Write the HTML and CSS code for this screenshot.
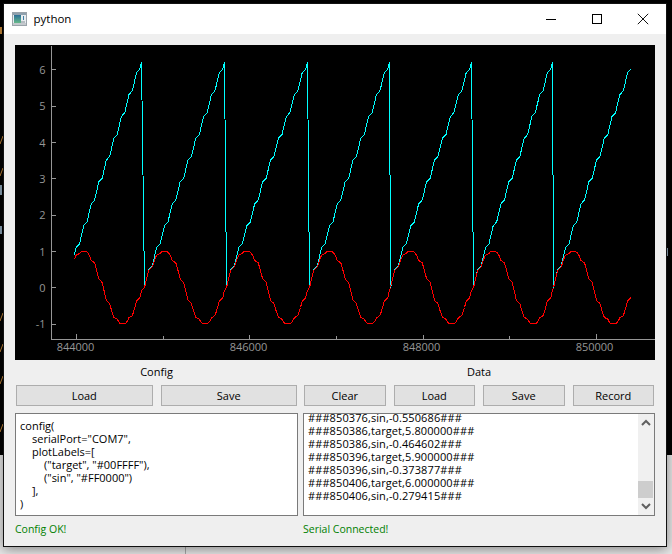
FILE: index.html
```html
<!DOCTYPE html>
<html lang="en">
<head>
<meta charset="utf-8">
<title>python</title>
<link rel="stylesheet" href="styles.css">
</head>
<body>
<div class="desk" aria-hidden="true">
  <div class="desk-dark"></div>
  <i class="frag frag-a"></i>
  <i class="frag frag-b"></i>
  <i class="frag frag-c"></i>
  <i class="frag frag-d"></i>
  <i class="frag frag-e"></i>
  <i class="frag frag-f"></i>
  <i class="frag frag-g"></i>
  <i class="frag frag-h"></i>
  <i class="frag frag-i"></i>
  <i class="frag frag-j"></i>
  <i class="desk-line"></i>
</div>
<main class="window">
  <header class="titlebar">
    <svg class="app-icon" width="15" height="14" viewBox="0 0 15 14">
      <defs>
        <linearGradient id="ig" x1="0" y1="0" x2="0" y2="1">
          <stop offset="0" stop-color="#2b6f97"/>
          <stop offset="1" stop-color="#66b98a"/>
        </linearGradient>
      </defs>
      <rect x="0.5" y="0.5" width="14" height="13" fill="#e8ecef" stroke="#9aa3aa"/>
      <rect x="1" y="1" width="13" height="2" fill="#8fa0ad"/>
      <rect x="2" y="3" width="7" height="8" fill="url(#ig)"/>
      <rect x="11" y="4" width="1" height="4" fill="#3f7fa5"/>
      <rect x="9" y="9" width="4" height="2" fill="#b5bcc2"/>
      <rect x="1" y="11" width="13" height="2" fill="#c4c9cd"/>
    </svg>
    <span class="title-text">python</span>
    <div class="controls">
      <div class="ctl"><svg width="12" height="12" viewBox="0 0 12 12"><path d="M1 6.5H11" stroke="#000" fill="none"/></svg></div>
      <div class="ctl"><svg width="12" height="12" viewBox="0 0 12 12"><rect x="1.5" y="1.5" width="9" height="9" fill="none" stroke="#000"/></svg></div>
      <div class="ctl"><svg width="12" height="12" viewBox="0 0 12 12"><path d="M.8.8L11.2 11.2M11.2.8L.8 11.2" stroke="#111" fill="none"/></svg></div>
    </div>
  </header>
  <div class="content">
    <svg class="plot" width="640" height="315" viewBox="15 45 640 315">
      <g class="axis">
        <path d="M51.5 46V339.5H655"/>
        <path d="M52 69.5H56M52 106H56M52 142.500H56M52 178.500H56M52 215H56M52 251.500H56M52 287.500H56M52 324H56"/>
        <path d="M76.500 334V339M163.500 336V339M249.500 335V339M336.500 336V339M423.500 335V339M509.500 336V339M596.500 334V339"/>
      </g>
      <g class="ylabels">
        <text x="45.500" y="73.500">6</text>
        <text x="45.500" y="110">5</text>
        <text x="45.500" y="146.500">4</text>
        <text x="45.500" y="182.500">3</text>
        <text x="45.500" y="219">2</text>
        <text x="45.500" y="255.500">1</text>
        <text x="45.500" y="291.500">0</text>
        <text x="45.500" y="328">-1</text>
      </g>
      <g class="xlabels">
        <text x="75.500" y="351">844000</text>
        <text x="248.500" y="351">846000</text>
        <text x="421.500" y="351">848000</text>
        <text x="594.500" y="351">850000</text>
      </g>
      <polyline id="trace-target" class="trace trace-target" points=""/>
      <polyline id="trace-sin" class="trace trace-sin" points=""/>
    </svg>

    <div class="panels">
      <section class="panel panel-config">
        <div class="panel-title">Config</div>
        <div class="btn-row btn-row-config">
          <button class="btn" type="button">Load</button>
          <button class="btn" type="button">Save</button>
        </div>
        <div class="editor editor-config">
          <div>config(</div>
          <div class="ind1">serialPort="COM7",</div>
          <div class="ind1">plotLabels=[</div>
          <div class="ind2">("target", "#00FFFF"),</div>
          <div class="ind2">("sin", "#FF0000")</div>
          <div class="ind1">],</div>
          <div>)</div>
        </div>
        <div class="status">Config OK!</div>
      </section>
      <section class="panel panel-data">
        <div class="panel-title">Data</div>
        <div class="btn-row">
          <button class="btn" type="button">Clear</button>
          <button class="btn" type="button">Load</button>
          <button class="btn" type="button">Save</button>
          <button class="btn" type="button">Record</button>
        </div>
        <div class="editor editor-data">
          <div class="log">
            <div>###850376,sin,-0.550686###</div>
            <div>###850386,target,5.800000###</div>
            <div>###850386,sin,-0.464602###</div>
            <div>###850396,target,5.900000###</div>
            <div>###850396,sin,-0.373877###</div>
            <div>###850406,target,6.000000###</div>
            <div>###850406,sin,-0.279415###</div>
          </div>
          <div class="scrollbar">
            <svg width="16" height="17" viewBox="0 0 16 17"><path d="M4 11L8 7L12 11" fill="none" stroke="#606060" stroke-width="2"/></svg>
            <div class="track"><div class="thumb"></div></div>
            <svg width="16" height="17" viewBox="0 0 16 17"><path d="M4 6L8 10L12 6" fill="none" stroke="#606060" stroke-width="2"/></svg>
          </div>
        </div>
        <div class="status">Serial Connected!</div>
      </section>
    </div>
  </div>
</main>
<script src="plot.js"></script>
</body>
</html>
```

FILE: styles.css
```css
* { box-sizing: border-box; }
html, body { margin: 0; padding: 0; }
body {
  width: 672px;
  height: 554px;
  position: relative;
  overflow: hidden;
  background: #e8e8e8;
  font-family: "Open Sans", "Noto Sans", sans-serif;
  font-size: 11px;
  color: #000;
}

/* desktop behind the window */
.desk { position: absolute; inset: 0; overflow: hidden; }
.desk-dark { height: 455px; background: #000; }
.frag { position: absolute; display: block; width: 1px; height: 8px; background: #c98a3a; transform: skewX(-20deg); }
.frag-a { left: 1px; top: 136px; }
.frag-b { left: 1px; top: 168px; }
.frag-c { left: 1px; top: 313px; }
.frag-d { left: 1px; top: 344px; }
.frag-e { left: 1px; top: 376px; }
.frag-f { left: 1px; top: 424px; }
.frag-g { left: 0; top: 27px; width: 2px; height: 7px; transform: none; }
.frag-h { left: 0; top: 185px; width: 2px; height: 10px; transform: none; background: #8fa6b8; }
.frag-i { left: 667px; top: 248px; width: 1px; height: 8px; transform: none; background: #8fa6b8; }
.frag-j { left: 0; top: 226px; width: 2px; height: 8px; transform: none; background: #8fa6b8; }
.desk-line { position: absolute; display: block; left: 185px; top: 547px; width: 1px; height: 7px; background: #a8a8a8; }

/* window */
.window {
  position: absolute;
  left: 3px;
  top: 3px;
  width: 664px;
  height: 544px;
  border: 1px solid #111;
  background: #efefef;
  box-shadow: 0 2px 12px rgba(0, 0, 0, .45);
  display: flex;
  flex-direction: column;
}
.titlebar {
  height: 30px;
  flex: none;
  background: #fff;
  display: flex;
  align-items: center;
  padding-left: 8px;
}
.app-icon { flex: none; margin-top: -1px; }
.title-text { margin-left: 6.5px; font-size: 11.5px; margin-top: -1px; }
.controls { margin-left: auto; display: flex; }
.ctl { width: 46px; height: 30px; display: flex; align-items: center; justify-content: center; padding-bottom: 1px; }

.content { flex: 1; padding: 11px 11px 0; display: flex; flex-direction: column; }
.plot { display: block; flex: none; background: #000; }
.axis path { fill: none; stroke: #969696; shape-rendering: crispEdges; }
.ylabels text, .xlabels text { fill: #969696; font-family: "Open Sans", sans-serif; font-size: 11px; }
.ylabels text { text-anchor: end; }
.xlabels text { text-anchor: middle; }
.trace { fill: none; stroke-width: 1; shape-rendering: crispEdges; }
.trace-target { stroke: #00ffff; }
.trace-sin { stroke: #ff0000; }

.panels { display: flex; gap: 5px; }
.panel { display: flex; flex-direction: column; min-width: 0; }
.panel-config { width: 283px; }
.panel-data { width: 352px; }
.panel-title { height: 25px; line-height: 24px; text-align: center; }
.btn-row { display: flex; gap: 8px; padding: 0 1px; height: 21px; }
.btn-row .btn { flex: 1 1 0; }
.btn {
  margin: 0;
  padding: 0;
  font: inherit;
  color: #000;
  background: #e1e1e1;
  border: 1px solid #adadad;
}
.editor {
  margin-top: 7px;
  height: 103px;
  background: #fff;
  border: 1px solid #7a7a7a;
  line-height: 13px;
}
.editor-config { padding: 5px 4px 0; }
.ind1 { padding-left: 12px; }
.ind2 { padding-left: 24px; }
.editor-data { display: flex; overflow: hidden; }
.log {
  flex: 1;
  min-width: 0;
  display: flex;
  flex-direction: column;
  justify-content: flex-end;
  padding: 0 0 13px 4px;
  overflow: hidden;
  white-space: nowrap;
  letter-spacing: .1px;
}
.scrollbar { width: 16px; flex: none; background: #f0f0f0; display: flex; flex-direction: column; }
.scrollbar svg { display: block; flex: none; }
.track { flex: 1; display: flex; flex-direction: column; justify-content: flex-end; }
.thumb { height: 17px; width: 15px; background: #cdcdcd; }
.status { margin-top: 6px; height: 14px; line-height: 14px; font-size: 10.5px; color: #008000; }
```

FILE: plot.js
```js
// Target ramps 0.1 per sample, sampled in bursts of six, and wraps at 2*pi; the second trace is sin(target).
var GROUP = 7.83, SAMPLE = 0.867;
var cycles = [
  { k0: 9, k1: 62, x0: 74.5, x1: 141.5 },
  { k0: 0, k1: 62, x0: 144.5, x1: 224.5 },
  { k0: 0, k1: 62, x0: 226.5, x1: 307.5 },
  { k0: 0, k1: 62, x0: 309.5, x1: 389.5 },
  { k0: 0, k1: 62, x0: 390.5, x1: 471.5 },
  { k0: 0, k1: 62, x0: 473.5, x1: 552.5 },
  { k0: 0, k1: 60, x0: 553.5, x1: 631 }
];
function along(k) { return Math.floor(k / 6) * GROUP + (k % 6) * SAMPLE; }
function yOf(v) { return 287.5 - 36.4 * v; }
var target = [], sine = [];
cycles.forEach(function (c) {
  var scale = (c.x1 - c.x0) / (along(c.k1) - along(c.k0));
  for (var k = c.k0; k <= c.k1; k++) {
    var x = c.x0 + (along(k) - along(c.k0)) * scale;
    var v = k / 10;
    target.push(x.toFixed(1) + "," + yOf(v).toFixed(1));
    sine.push(x.toFixed(1) + "," + yOf(Math.sin(v)).toFixed(1));
  }
});
document.getElementById("trace-target").setAttribute("points", target.join(" "));
document.getElementById("trace-sin").setAttribute("points", sine.join(" "));
```
